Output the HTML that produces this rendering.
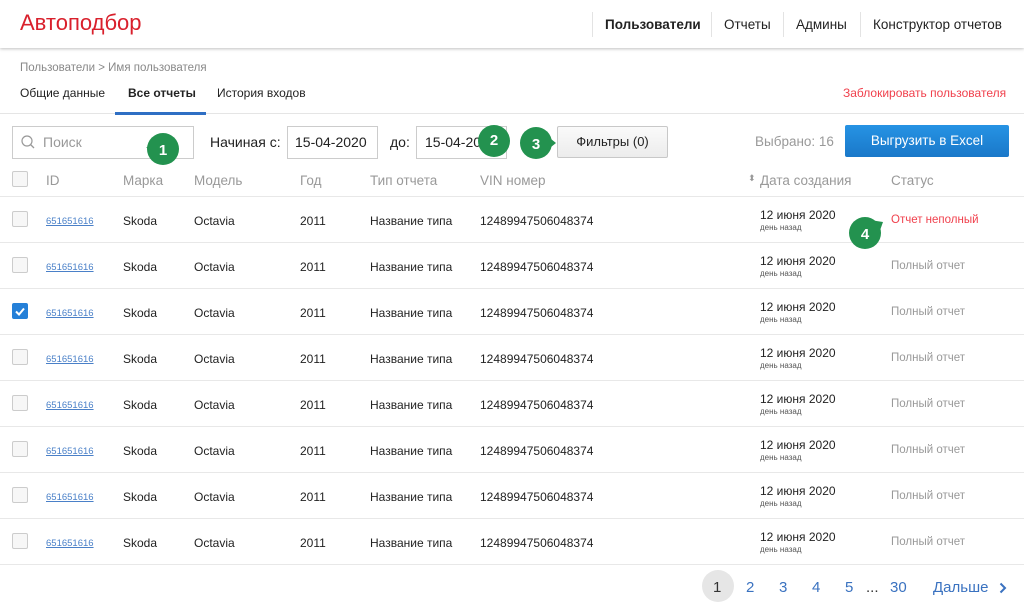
<!DOCTYPE html>
<html><head><meta charset="utf-8"><style>
*{box-sizing:border-box;margin:0;padding:0}
body{width:1024px;height:608px;overflow:hidden;background:#fff;font-family:"Liberation Sans","DejaVu Sans",sans-serif;color:#222;position:relative}
.a{position:absolute;white-space:nowrap}
.hdr{position:absolute;left:0;top:0;width:1024px;height:48px;background:#fff;box-shadow:0 1px 3px rgba(0,0,0,.25)}
.nav{position:absolute;top:12px;height:25px;border-left:1px solid #e3e3e3;font-size:13.5px;line-height:25px;padding-left:12px}
.inp{position:absolute;border:1px solid #ccc;background:#fff;height:33px}
.row{position:absolute;left:0;width:1024px;height:46px;border-bottom:1px solid #e8e8e8;font-size:12px}
.row span{position:absolute;top:17px}
.cb{position:absolute;left:12px;width:16px;height:16px;border:1px solid #ccc;border-radius:2px;background:#f7f7f7}
.id{color:#4a80c8;text-decoration:underline;font-size:9.5px;left:46px;top:19px!important}
.mk{position:absolute;width:32px;height:32px;border-radius:50%;background:#23924f;color:#fff;font-weight:bold;font-size:15px;text-align:center;line-height:32px}
.pg{position:absolute;top:579px;font-size:15px;color:#3a72c0}
</style></head><body>
<div class="hdr">
<div class="a" style="left:20px;top:10px;font-size:22px;color:#d9202c">Автоподбор</div>
<div class="nav" style="left:592px;font-weight:bold;color:#222;width:120px">Пользователи</div>
<div class="nav" style="left:711px;width:73px">Отчеты</div>
<div class="nav" style="left:783px;width:78px">Админы</div>
<div class="nav" style="left:860px">Конструктор отчетов</div>
</div>
<div class="a" style="left:20px;top:62px;font-size:11.5px;color:#888">Пользователи &gt; Имя пользователя</div>
<div class="a" style="left:20px;top:86px;font-size:12px;color:#222">Общие данные</div>
<div class="a" style="left:128px;top:86px;font-size:12px;font-weight:bold">Все отчеты</div>
<div class="a" style="left:217px;top:86px;font-size:12px">История входов</div>
<div class="a" style="left:843px;top:86px;font-size:12px;color:#f0414d">Заблокировать пользователя</div>
<div class="a" style="left:0;top:113px;width:1024px;height:1px;background:#e5e5e5"></div>
<div class="a" style="left:115px;top:112px;width:91px;height:3px;background:#2f6fc4"></div>

<div class="inp" style="left:12px;top:126px;width:182px"></div>
<svg class="a" style="left:20px;top:134px" width="16" height="16"><circle cx="7" cy="7" r="5" fill="none" stroke="#999" stroke-width="1.2"/><line x1="10.5" y1="10.5" x2="14" y2="14" stroke="#999" stroke-width="1.3"/></svg>
<div class="a" style="left:43px;top:134px;font-size:14px;color:#999">Поиск</div>
<div class="a" style="left:210px;top:134px;font-size:14px">Начиная с:</div>
<div class="inp" style="left:287px;top:126px;width:91px"></div>
<div class="a" style="left:295px;top:134px;font-size:14px">15-04-2020</div>
<div class="a" style="left:390px;top:134px;font-size:14px">до:</div>
<div class="inp" style="left:416px;top:126px;width:91px;overflow:hidden"><span style="position:absolute;left:8px;top:7px;font-size:14px">15-04-2020</span></div>
<div class="a" style="left:557px;top:126px;width:111px;height:32px;border:1px solid #c8c8c8;border-radius:2px;background:linear-gradient(#fafafa,#ececec);font-size:13px;text-align:center;line-height:30px">Фильтры (0)</div>
<div class="a" style="left:755px;top:134px;font-size:13.5px;color:#999">Выбрано: 16</div>
<div class="a" style="left:845px;top:125px;width:164px;height:32px;border-radius:2px;background:linear-gradient(#2693e4,#1a78c9);color:#fff;font-size:13.5px;text-align:center;line-height:32px">Выгрузить в Excel</div>

<div class="row" style="top:160px;height:37px;font-size:13.5px;color:#999">
<div class="cb" style="top:11px"></div>
<span style="left:46px;top:13px">ID</span><span style="left:123px;top:13px">Марка</span><span style="left:194px;top:13px">Модель</span><span style="left:300px;top:13px">Год</span><span style="left:370px;top:13px">Тип отчета</span><span style="left:480px;top:13px">VIN номер</span><span style="left:748px;top:13px;font-size:9px">⬍</span><span style="left:760px;top:13px">Дата создания</span><span style="left:891px;top:13px">Статус</span>
</div>
<div id="rows"></div>
<script>
var h='';for(var i=0;i<8;i++){var t=197+i*46;var st=i==0?'<span style="left:891px;color:#f0414d;font-size:11.5px">Отчет неполный</span>':'<span style="left:891px;color:#999;font-size:11.5px">Полный отчет</span>';
var cb=i==2?'<div class="cb" style="top:14px;background:#2580d8;border-color:#2580d8"><svg width="14" height="14" style="position:absolute;left:0;top:0"><path d="M3 7.5l3 3 5-6" fill="none" stroke="#fff" stroke-width="2"/></svg></div>':'<div class="cb" style="top:14px"></div>';
h+='<div class="row" style="top:'+t+'px">'+cb+'<span class="id">651651616</span><span style="left:123px">Skoda</span><span style="left:194px">Octavia</span><span style="left:300px">2011</span><span style="left:370px">Название типа</span><span style="left:480px">12489947506048374</span><span style="left:760px;top:11px">12 июня 2020</span><span style="left:760px;top:26px;font-size:8px;color:#555">день назад</span>'+st+'</div>';}
document.getElementById('rows').outerHTML=h;
</script>
<div class="a" style="left:702px;top:570px;width:32px;height:32px;border-radius:50%;background:#e6e6e6"></div>
<div class="pg" style="left:713px;color:#333">1</div>
<div class="pg" style="left:746px">2</div>
<div class="pg" style="left:779px">3</div>
<div class="pg" style="left:812px">4</div>
<div class="pg" style="left:845px">5</div>
<div class="pg" style="left:866px;color:#333">...</div>
<div class="pg" style="left:890px">30</div>
<div class="pg" style="left:933px">Дальше</div>
<svg class="a" style="left:999px;top:582px" width="8" height="12"><path d="M1.5 1.5l4.5 4.5-4.5 4.5" fill="none" stroke="#3a72c0" stroke-width="2"/></svg>

<svg class="a" style="left:140px;top:130px" width="50" height="40"><path d="M6 18 L16 10 L23 18 Z" fill="#23924f"/><circle cx="23" cy="19" r="16" fill="#23924f"/><text x="23" y="25" fill="#fff" font-size="15" font-weight="bold" text-anchor="middle" font-family="Liberation Sans">1</text></svg>
<div class="mk" style="left:478px;top:125px">2</div>
<svg class="a" style="left:518px;top:126px" width="42" height="36"><path d="M38 17 L28 9 L28 25 Z" fill="#23924f"/><circle cx="18" cy="17" r="16" fill="#23924f"/><text x="18" y="23" fill="#fff" font-size="15" font-weight="bold" text-anchor="middle" font-family="Liberation Sans">3</text></svg>
<svg class="a" style="left:846px;top:214px" width="42" height="38"><path d="M37 8 L24 6 L32 22 Z" fill="#23924f"/><circle cx="19" cy="19" r="16" fill="#23924f"/><text x="19" y="25" fill="#fff" font-size="15" font-weight="bold" text-anchor="middle" font-family="Liberation Sans">4</text></svg>
</body></html>
